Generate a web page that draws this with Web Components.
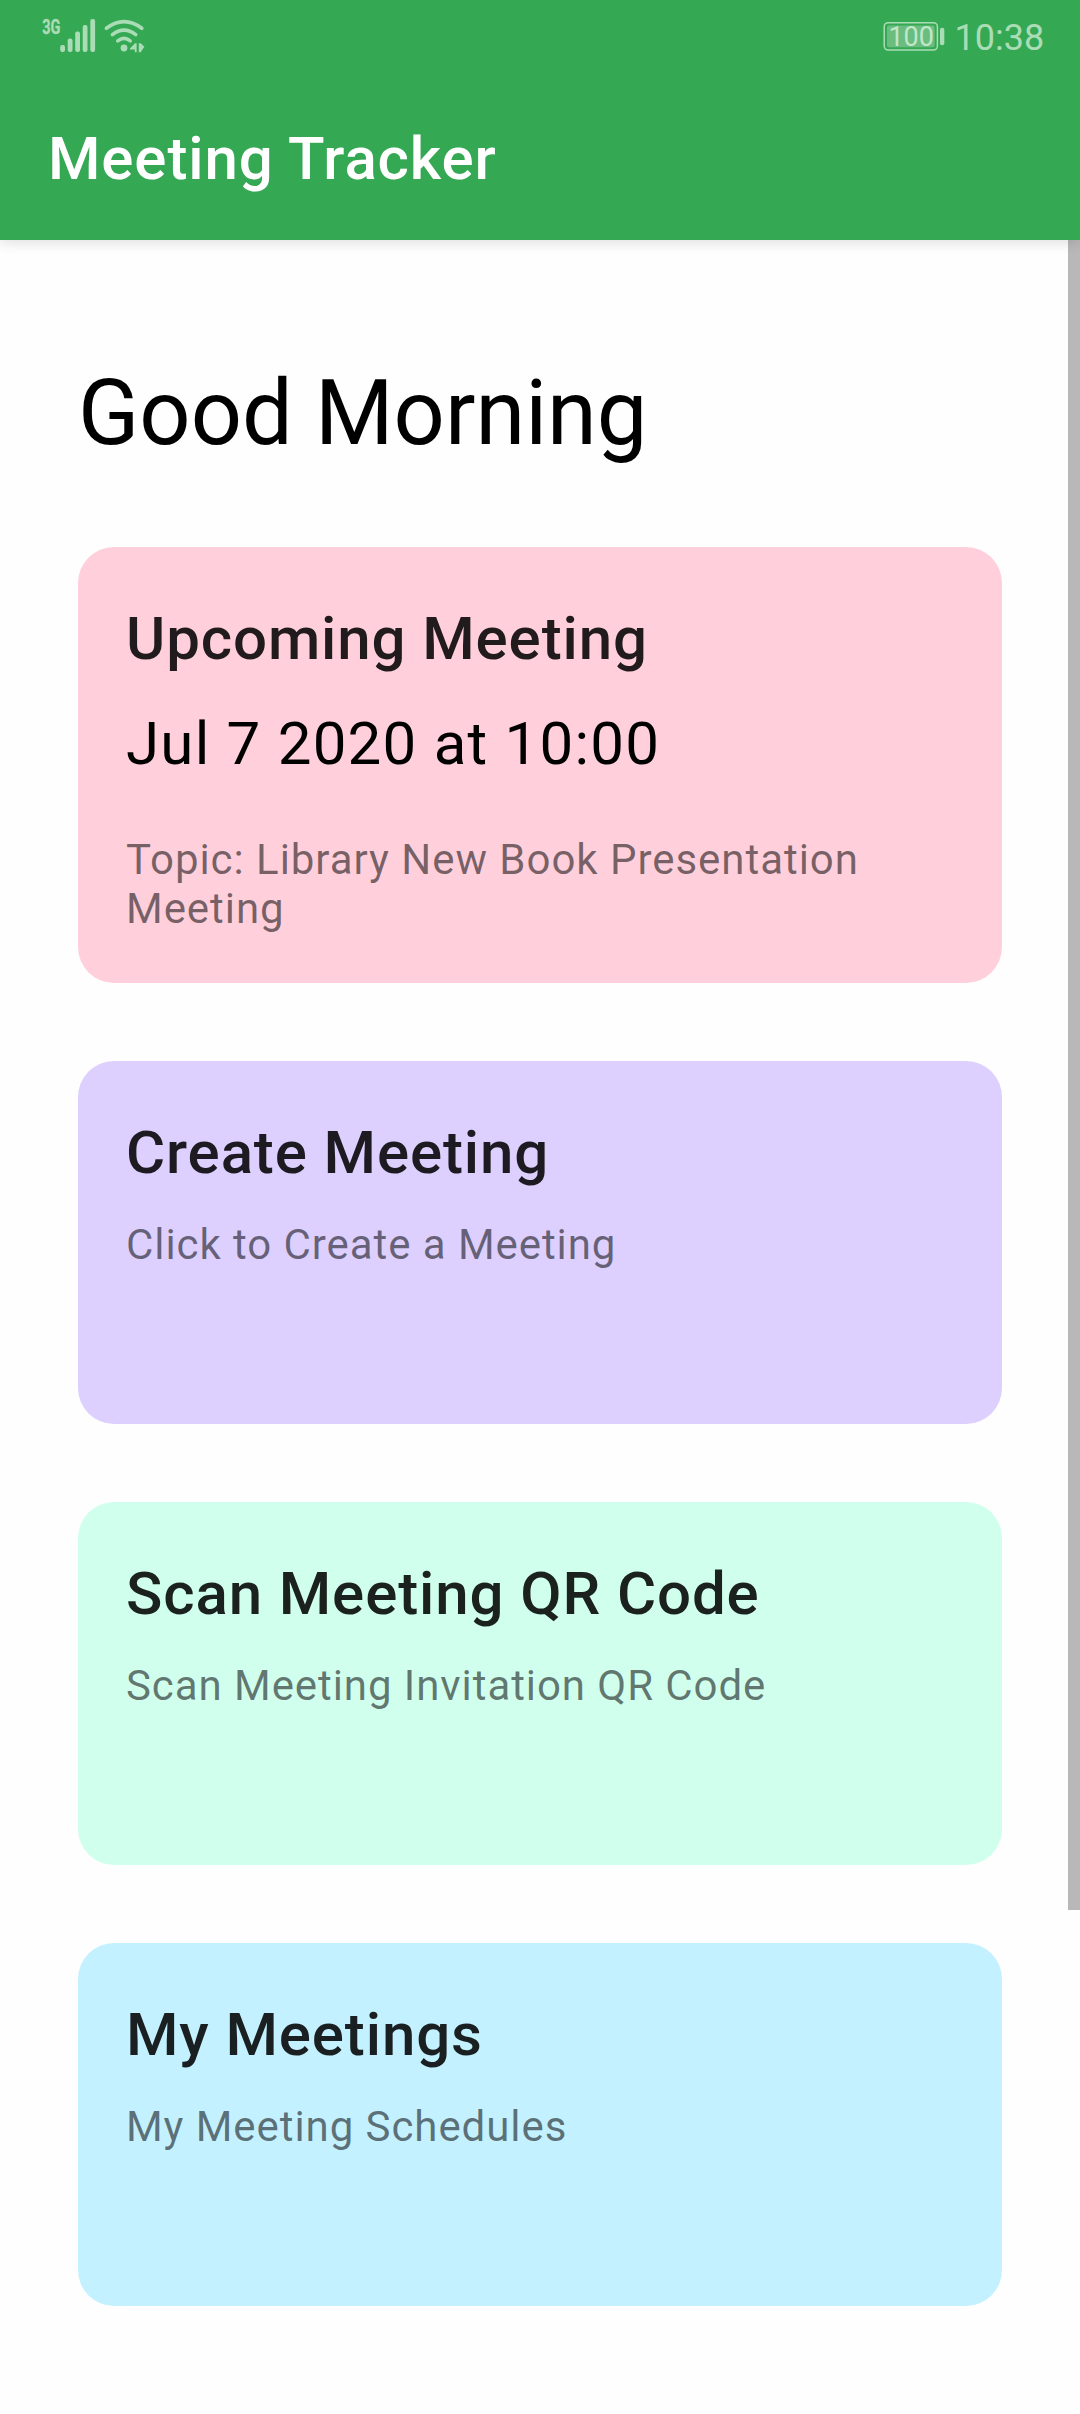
<!DOCTYPE html>
<html lang="en">
<head>
<meta charset="utf-8">
<title>Meeting Tracker</title>
<style>
  body { margin: 0; background: #fefefe; font-family: Roboto, "Liberation Sans", sans-serif; }
</style>
</head>
<body>
<meeting-app></meeting-app>

<template id="status-bar-tpl">
  <style>
    :host { display: flex; justify-content: space-between; height: 72px; color: #aadcb6; }
    svg { display: block; }
    text { font-family: Roboto, sans-serif; fill: currentColor; }
    .level { fill: #c0e7c9; }
  </style>
  <svg width="160" height="72" viewBox="0 0 160 72" fill="currentColor">
    <text transform="translate(42.2 34) scale(.69 1)" font-size="21" font-weight="700" stroke="currentColor" stroke-width=".4">3G</text>
    <rect x="60.2" y="45" width="4.8" height="7" rx="2"/>
    <rect x="67.7" y="38.5" width="4.8" height="13.5" rx="2"/>
    <rect x="75.2" y="31.6" width="4.8" height="20.4" rx="2"/>
    <rect x="82.7" y="25" width="4.8" height="27" rx="2"/>
    <rect x="90.3" y="19" width="4.8" height="33" rx="2"/>
    <g fill="none" stroke="currentColor" stroke-width="3.6" stroke-linecap="round">
      <path d="M106.4 28.3Q124 15 141.8 28.3"/>
      <path d="M112.4 34.6Q124 25.6 135.7 34.6"/>
      <path d="M117.8 40.8Q124 36 130.2 40.8"/>
    </g>
    <circle cx="124" cy="48" r="3.4"/>
    <path d="M130 48.6L135 43.2H136.6V52.2H134.8V49.6H130ZM138.8 43.2H140.6L144.4 46.8L140.6 52.2H138.8Z"/>
  </svg>
  <svg width="200" height="72" viewBox="880 0 200 72" fill="currentColor">
    <rect x="884.2" y="22.7" width="53.2" height="27.4" rx="4" fill="none" stroke="currentColor" stroke-width="1.5"/>
    <rect x="887" y="25.6" width="47.6" height="21.6" rx="2" fill="#6abc7f"/>
    <rect x="940" y="27.7" width="4.3" height="17.6" rx="2"/>
    <text class="level" x="888.4" y="45.5" font-size="27">100</text>
    <text x="954.6" y="50" font-size="36">10:38</text>
  </svg>
</template>

<template id="app-bar-tpl">
  <style>
    :host { display: block; position: relative; z-index: 2; height: 240px; background: #35a854;
            box-shadow: 0 3px 12px rgba(0,0,0,.12); }
    h1 { margin: 0; padding: 51px 48px 0; font-size: 60px; line-height: 71px; font-weight: 500;
         letter-spacing: .88px; color: #fff; }
  </style>
  <status-bar></status-bar>
  <h1><slot></slot></h1>
</template>

<template id="meeting-card-tpl">
  <style>
    :host { display: flex; flex-direction: column; box-sizing: border-box; height: 363px;
            padding: 56px 48px 0; border-radius: 36px; background: var(--card-color); }
    :host([featured]) { height: 436px; }
    h2 { margin: 0; font-size: 60px; line-height: 71px; font-weight: 500;
         letter-spacing: .89px; color: rgba(0,0,0,.87); }
    ::slotted([slot="when"]) { margin-top: 34px; font-size: 60px; line-height: 71px;
         letter-spacing: 1.24px; color: #000; }
    p { margin: 32px 0 0; font-size: 42px; line-height: 49px; letter-spacing: .93px; color: rgba(0,0,0,.54); }
    :host([featured]) p { margin-top: 56px; letter-spacing: .96px; }
  </style>
  <h2><slot name="title"></slot></h2>
  <slot name="when"></slot>
  <p><slot></slot></p>
</template>

<template id="meeting-app-tpl">
  <style>
    :host { display: flex; flex-direction: column; height: 2414px; overflow: hidden; }
    main { flex: 1; display: flex; }
    .content { flex: 1; display: flex; flex-direction: column; gap: 78px; padding: 121px 66px 0 78px; }
    .greeting { margin: 0 0 3px; font-size: 90px; line-height: 105px; font-weight: 400; color: #000; }
    .scrollbar { width: 12px; height: 1670px; background: #b8b8b8; }
  </style>
  <app-bar>Meeting Tracker</app-bar>
  <main>
    <div class="content">
      <div class="greeting">Good Morning</div>
      <meeting-card featured style="--card-color:#ffd0db">
        <span slot="title">Upcoming Meeting</span>
        <div slot="when">Jul 7 2020 at 10:00</div>
        Topic: Library New Book Presentation Meeting
      </meeting-card>
      <meeting-card style="--card-color:#ddd0ff">
        <span slot="title">Create Meeting</span>Click to Create a Meeting
      </meeting-card>
      <meeting-card style="--card-color:#d0ffee">
        <span slot="title">Scan Meeting QR Code</span>Scan Meeting Invitation QR Code
      </meeting-card>
      <meeting-card style="--card-color:#c4f1ff">
        <span slot="title">My Meetings</span>My Meeting Schedules
      </meeting-card>
    </div>
    <div class="scrollbar"></div>
  </main>
</template>

<script>
  for (const name of ['status-bar', 'app-bar', 'meeting-card', 'meeting-app']) {
    customElements.define(name, class extends HTMLElement {
      constructor() {
        super();
        this.attachShadow({ mode: 'open' })
          .append(document.getElementById(name + '-tpl').content.cloneNode(true));
      }
    });
  }
</script>
</body>
</html>
